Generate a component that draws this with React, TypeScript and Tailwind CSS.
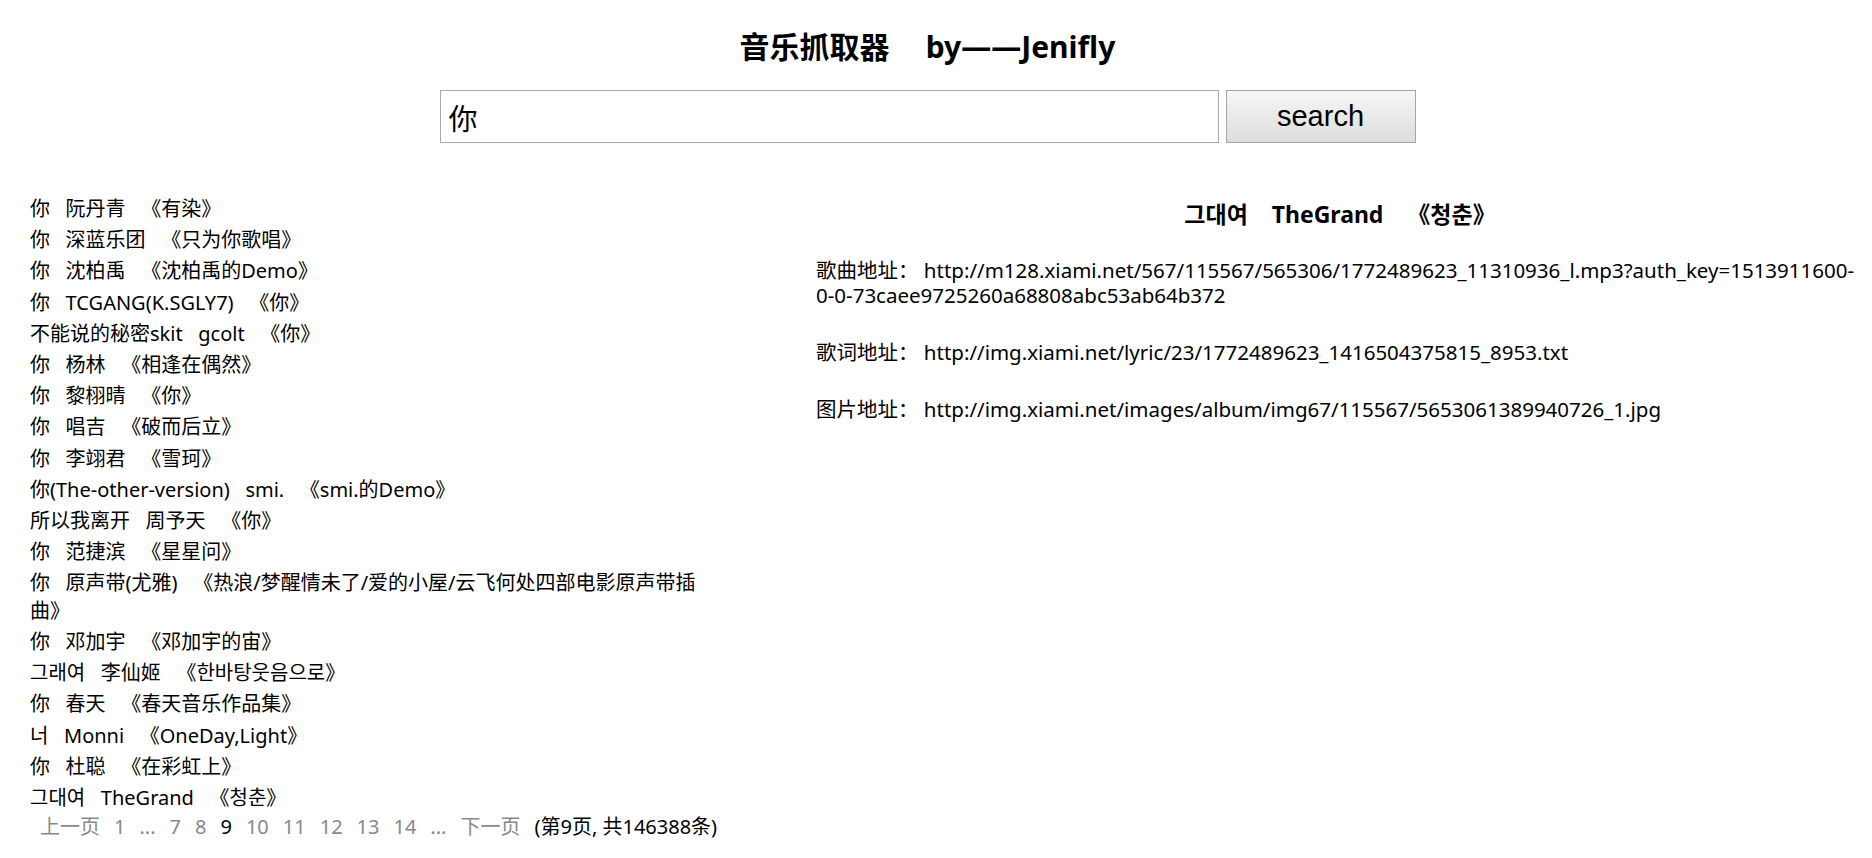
import React from "react";

const songs: [string, string, string][] = [
  ["你", "阮丹青", "有染"],
  ["你", "深蓝乐团", "只为你歌唱"],
  ["你", "沈柏禹", "沈柏禹的Demo"],
  ["你", "TCGANG(K.SGLY7)", "你"],
  ["不能说的秘密skit", "gcolt", "你"],
  ["你", "杨林", "相逢在偶然"],
  ["你", "黎栩晴", "你"],
  ["你", "唱吉", "破而后立"],
  ["你", "李翊君", "雪珂"],
  ["你(The-other-version)", "smi.", "smi.的Demo"],
  ["所以我离开", "周予天", "你"],
  ["你", "范捷滨", "星星问"],
  ["你", "原声带(尤雅)", "热浪/梦醒情未了/爱的小屋/云飞何处四部电影原声带插曲"],
  ["你", "邓加宇", "邓加宇的宙"],
  ["그래여", "李仙姬", "한바탕웃음으로"],
  ["你", "春天", "春天音乐作品集"],
  ["너", "Monni", "OneDay,Light"],
  ["你", "杜聪", "在彩虹上"],
  ["그대여", "TheGrand", "청춘"],
];

const sep = "\u00a0\u00a0\u00a0";

function Pager() {
  const pages = ["1", "...", "7", "8", "9", "10", "11", "12", "13", "14", "..."];
  return (
    <div className="flex items-center gap-[14px] whitespace-nowrap pl-[10px] text-[20px] leading-[23px] text-[#888]">
      <span>上一页</span>
      {pages.map((p, i) => (
        <span key={i} className={p === "9" ? "text-black" : ""}>
          {p}
        </span>
      ))}
      <span>下一页</span>
      <span className="text-black">(第9页, 共146388条)</span>
    </div>
  );
}

function SongDetail() {
  return (
    <div className="ml-[101px] w-[1048px] text-[20.5px]">
      <h3 className="pt-[5px] text-center text-[23px] font-bold leading-[28px]">
        그대여{"\u00a0\u00a0\u00a0\u00a0"}TheGrand{"\u00a0\u00a0\u00a0\u00a0"}《청춘》
      </h3>
      <p className="mt-[30px] leading-[25px]">
        歌曲地址：
        {"\u00a0"}http://m128.xiami.net/567/115567/565306/1772489623_11310936_l.mp3?auth_key=1513911600-
        <wbr />
        <span className="whitespace-nowrap">0-0-73caee9725260a68808abc53ab64b372</span>
      </p>
      <p className="mt-[32px] leading-[25px]">
        歌词地址：{"\u00a0"}http://img.xiami.net/lyric/23/1772489623_1416504375815_8953.txt
      </p>
      <p className="mt-[32px] leading-[25px]">
        图片地址：{"\u00a0"}http://img.xiami.net/images/album/img67/115567/5653061389940726_1.jpg
      </p>
    </div>
  );
}

export default function App() {
  return (
    <div className="min-h-screen bg-white font-['Noto_Sans','Noto_Sans_CJK_SC',sans-serif] text-black">
      <h1 className="pt-[27px] pr-[17px] text-center text-[30px] font-bold leading-[40px]">
        音乐抓取器{"\u00a0\u00a0\u00a0\u00a0"}
        <span className="ml-[5px]">by——Jenifly</span>
      </h1>

      <div className="mt-[23px] flex justify-center gap-[7px] pr-[17px]">
        <input
          defaultValue="你"
          className="h-[53px] w-[779px] border border-[#a9a9a9] px-[8px] text-[29px] outline-none"
        />
        <button className="h-[53px] w-[190px] border border-[#a6a6a6] bg-gradient-to-b from-[#f6f6f6] to-[#dddddd] font-['Liberation_Sans',sans-serif] text-[29px]">
          search
        </button>
      </div>

      <div className="mt-[52px] flex items-start">
        <div className="w-[715px] shrink-0 pl-[30px]">
          <ul className="text-[20px] leading-[27.5px]">
            {songs.map(([name, artist, album], i) => (
              <li key={i} className="mb-[3.7px]">
                {name}
                {sep}
                {artist}
                {sep}《{album}》
              </li>
            ))}
          </ul>
          <Pager />
        </div>
        <SongDetail />
      </div>
    </div>
  );
}
